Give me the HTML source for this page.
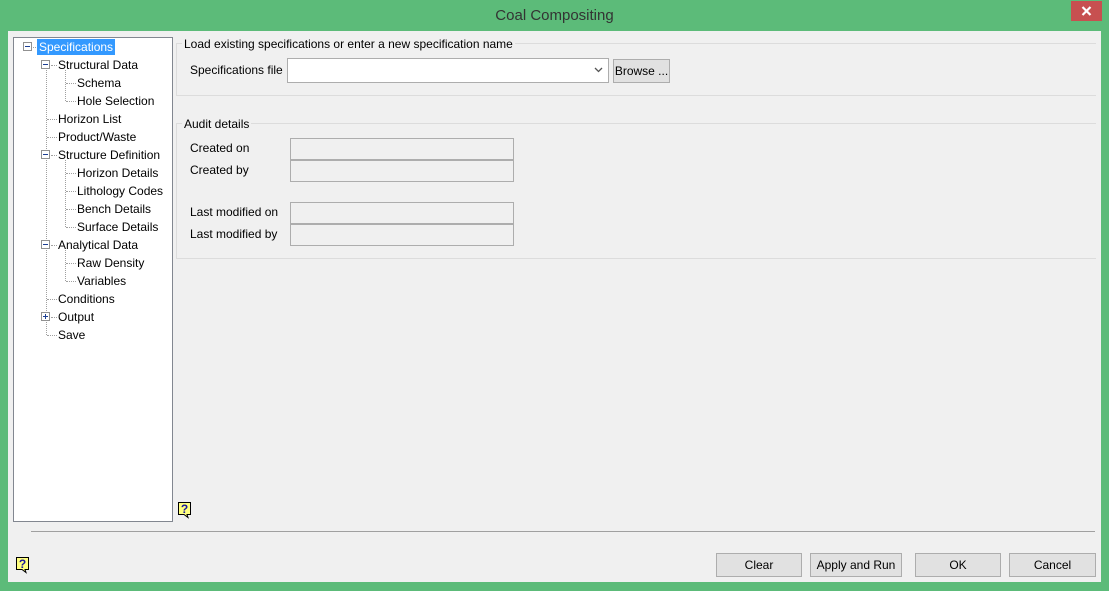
<!DOCTYPE html>
<html><head><meta charset="utf-8"><style>
*{margin:0;padding:0;box-sizing:border-box}
body{width:1109px;height:591px;background:#5cbb79;font-family:"Liberation Sans",sans-serif;font-size:12px;color:#000;position:relative;overflow:hidden}
.a{position:absolute}
.title{left:0;top:7px;width:1109px;text-align:center;font-size:15px;color:#333}
.close{left:1071px;top:1px;width:31px;height:20px;background:#c75050}
.client{left:8px;top:31px;width:1093px;height:551px;background:#f0f0f0}
.tree{left:13px;top:37px;width:160px;height:485px;background:#fff;border:1px solid #828790}
.t{position:absolute;white-space:nowrap;line-height:16px}
.vl{position:absolute;border-left:1px dotted #a0a0a0;width:0}
.hl{position:absolute;border-top:1px dotted #a0a0a0;height:0}
.bx{position:absolute;width:9px;height:9px;border:1px solid #919191;background:#fff}
.bx:before{content:"";position:absolute;left:1px;top:3px;width:5px;height:1px;background:#1c3f94}
.bx.p:after{content:"";position:absolute;left:3px;top:1px;width:1px;height:5px;background:#1c3f94}
.gl{position:absolute;height:0;border-top:1px solid #dcdcdc}
.gv{position:absolute;width:0;border-left:1px solid #dcdcdc}
.lab{position:absolute;background:#f0f0f0;padding:0 2px;line-height:14px}
.ro{position:absolute;width:224px;height:22px;border:1px solid #adadad;background:#f0f0f0}
.btn{position:absolute;height:24px;border:1px solid #adadad;background:#e1e1e1;text-align:center;line-height:22px}
</style></head><body>
<div class="a title">Coal Compositing</div>
<div class="a close"><svg width="31" height="20"><path d="M11.5 6 L19.5 14 M19.5 6 L11.5 14" stroke="#fff" stroke-width="2.2"/></svg></div>
<div class="a client"></div>
<div class="a tree"></div>
<div class="vl" style="left:46px;top:70px;height:265px"></div>
<div class="hl" style="left:33px;top:47px;width:5px"></div>
<div class="vl" style="left:65px;top:70px;height:31px"></div>
<div class="vl" style="left:65px;top:160px;height:67px"></div>
<div class="vl" style="left:65px;top:250px;height:31px"></div>
<div class="hl" style="left:51px;top:65px;width:6px"></div>
<div class="hl" style="left:51px;top:155px;width:6px"></div>
<div class="hl" style="left:51px;top:245px;width:6px"></div>
<div class="hl" style="left:51px;top:317px;width:6px"></div>
<div class="hl" style="left:47px;top:119px;width:10px"></div>
<div class="hl" style="left:47px;top:137px;width:10px"></div>
<div class="hl" style="left:47px;top:299px;width:10px"></div>
<div class="hl" style="left:47px;top:335px;width:10px"></div>
<div class="hl" style="left:66px;top:83px;width:10px"></div>
<div class="hl" style="left:66px;top:101px;width:10px"></div>
<div class="hl" style="left:66px;top:173px;width:10px"></div>
<div class="hl" style="left:66px;top:191px;width:10px"></div>
<div class="hl" style="left:66px;top:209px;width:10px"></div>
<div class="hl" style="left:66px;top:227px;width:10px"></div>
<div class="hl" style="left:66px;top:263px;width:10px"></div>
<div class="hl" style="left:66px;top:281px;width:10px"></div>
<div class="bx" style="left:23px;top:42px"></div>
<div class="bx" style="left:41px;top:60px"></div>
<div class="bx" style="left:41px;top:150px"></div>
<div class="bx" style="left:41px;top:240px"></div>
<div class="bx p" style="left:41px;top:312px"></div>
<div class="t" style="left:37px;top:39px;background:#3399ff;color:#fff;padding:0 2px">Specifications</div>
<div class="t" style="left:58px;top:57px">Structural Data</div>
<div class="t" style="left:77px;top:75px">Schema</div>
<div class="t" style="left:77px;top:93px">Hole Selection</div>
<div class="t" style="left:58px;top:111px">Horizon List</div>
<div class="t" style="left:58px;top:129px">Product/Waste</div>
<div class="t" style="left:58px;top:147px">Structure Definition</div>
<div class="t" style="left:77px;top:165px">Horizon Details</div>
<div class="t" style="left:77px;top:183px">Lithology Codes</div>
<div class="t" style="left:77px;top:201px">Bench Details</div>
<div class="t" style="left:77px;top:219px">Surface Details</div>
<div class="t" style="left:58px;top:237px">Analytical Data</div>
<div class="t" style="left:77px;top:255px">Raw Density</div>
<div class="t" style="left:77px;top:273px">Variables</div>
<div class="t" style="left:58px;top:291px">Conditions</div>
<div class="t" style="left:58px;top:309px">Output</div>
<div class="t" style="left:58px;top:327px">Save</div>
<div class="gl" style="left:176px;top:43px;width:920px"></div>
<div class="gv" style="left:176px;top:43px;height:53px"></div>
<div class="gl" style="left:176px;top:95px;width:920px"></div>
<div class="lab" style="left:182px;top:37px">Load existing specifications or enter a new specification name</div>
<div class="t" style="left:190px;top:62px">Specifications file</div>
<div class="a" style="left:287px;top:58px;width:322px;height:25px;border:1px solid #adadad;background:#fff"><svg class="a" style="left:306px;top:8px" width="9" height="6"><path d="M1 1 L4.5 4.5 L8 1" stroke="#555" stroke-width="1.3" fill="none"/></svg></div>
<div class="btn" style="left:613px;top:59px;width:57px;height:24px;line-height:22px">Browse ...</div>
<div class="gl" style="left:176px;top:123px;width:920px"></div>
<div class="gv" style="left:176px;top:123px;height:136px"></div>
<div class="gl" style="left:176px;top:258px;width:920px"></div>
<div class="lab" style="left:182px;top:117px">Audit details</div>
<div class="t" style="left:190px;top:140px">Created on</div>
<div class="t" style="left:190px;top:162px">Created by</div>
<div class="t" style="left:190px;top:204px">Last modified on</div>
<div class="t" style="left:190px;top:226px">Last modified by</div>
<div class="ro" style="left:290px;top:138px"></div>
<div class="ro" style="left:290px;top:160px"></div>
<div class="ro" style="left:290px;top:202px"></div>
<div class="ro" style="left:290px;top:224px"></div>
<svg class="a" style="left:177px;top:501px" width="16" height="18"><path d="M1.5 1.5 H13.5 V13.5 H10 L11 16.5 L7 13.5 H1.5 Z" fill="#ffff80" stroke="#000"/><text x="7.5" y="12" font-size="12" font-weight="bold" fill="#1a1a9c" text-anchor="middle" font-family="Liberation Sans">?</text></svg>
<svg class="a" style="left:15px;top:556px" width="16" height="18"><path d="M1.5 1.5 H13.5 V13.5 H10 L11 16.5 L7 13.5 H1.5 Z" fill="#ffff80" stroke="#000"/><text x="7.5" y="12" font-size="12" font-weight="bold" fill="#1a1a9c" text-anchor="middle" font-family="Liberation Sans">?</text></svg>
<div class="a" style="left:31px;top:531px;width:1064px;height:1px;background:#a0a0a0"></div>
<div class="btn" style="left:716px;top:553px;width:86px">Clear</div>
<div class="btn" style="left:810px;top:553px;width:92px">Apply and Run</div>
<div class="btn" style="left:915px;top:553px;width:86px">OK</div>
<div class="btn" style="left:1009px;top:553px;width:87px">Cancel</div>
</body></html>
